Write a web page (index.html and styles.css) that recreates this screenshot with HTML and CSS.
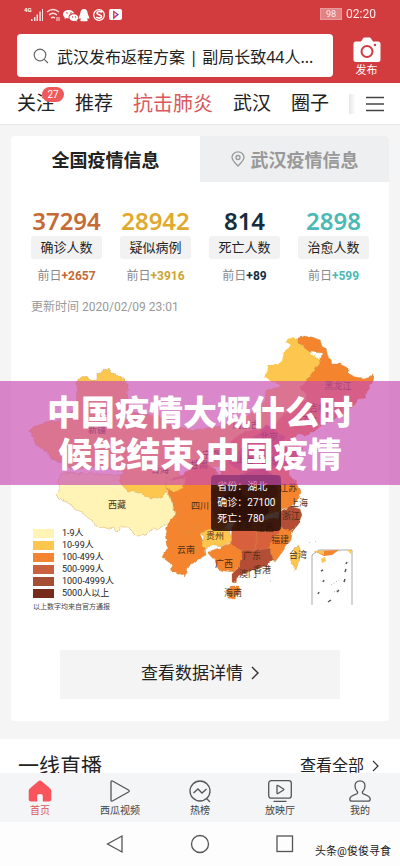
FILE: index.html
```html
<!DOCTYPE html>
<html lang="zh-CN">
<head>
<meta charset="utf-8">
<meta name="viewport" content="width=device-width, initial-scale=1">
<title>抗击肺炎</title>
<link rel="stylesheet" href="styles.css">
</head>
<body>
<div class="app">
  <header class="top">
    <div class="status">
      <svg class="status-icons" width="100" height="16" viewBox="0 0 100 16" fill="#fff" aria-hidden="true">
        <text x="0" y="6" class="net">4G</text>
        <path d="M7 13h1.500v2H7zM10 11h1.500v4H10zM12.500 8.500H14V15h-1.500zM15.300 5.500h1.500V15h-1.500zM18 3h1v12h-1z" opacity=".85"/>
        <g fill="none" stroke="#fff" stroke-width="1.300" opacity=".85"><path d="M23 6q6-5 12 0M25 9q4-3.500 8 0M27 12q2-1.500 4 0"/><path d="M33 11v4M35 11v4" stroke-width="1"/></g>
        <path d="M45 4c-3.800 0-6 2-6 4.300 0 1.400.8 2.500 1.800 3.200L40.500 13l1.900-1c.8.200 1.600.3 2.400.2-.8-3.200 1.700-5 5.300-4.900C49.600 5.300 47.600 4 45 4z"/>
        <path d="M50 8.200c-2.800 0-4.600 1.500-4.600 3.400S47.200 15 50 15l1.300-.2 1.700.7-.4-1.300c1-.6 1.500-1.500 1.500-2.500 0-2-1.800-3.500-4.100-3.500z"/>
        <g fill="#d33c3e"><circle cx="43" cy="7" r=".8"/><circle cx="47" cy="7" r=".8"/><circle cx="48.500" cy="11" r=".7"/><circle cx="51.500" cy="11" r=".7"/></g>
        <path d="M60 3c-2.300 0-3.600 1.700-3.600 4 0 1.800-1.900 3.600-1.700 5.500.3.800 1 .1 1.500-.5l.6 1.500c-1.100.7-.6 1.700.8 1.700h4.800c1.400 0 1.900-1 .8-1.700l.6-1.500c.5.600 1.200 1.300 1.500.5.200-1.900-1.700-3.700-1.700-5.500 0-2.300-1.300-4-3.600-4z"/>
        <circle cx="75" cy="9" r="5.300" fill="none" stroke="#fff" stroke-width="1.300"/>
        <path d="M78 6.300c-2-1.600-5-.8-5 .8 0 2 4.500 1.400 4.500 3.500 0 1.700-3.300 2-5.300.5" fill="none" stroke="#fff" stroke-width="1.700"/>
        <rect x="85" y="3" width="13" height="11" rx="2"/>
        <path d="M89 4.500l6 4-6 5z" fill="#713fa6"/><path d="M89 4.500l3 2v4l-3 3z" fill="#e5424c"/><path d="M90.500 7l2.500 1.500-2.500 1.500z" fill="#fff"/>
      </svg>
      <div class="status-right"><span class="battery">98</span><time>02:20</time></div>
    </div>
    <div class="search-row">
      <form class="search">
        <svg width="16" height="16" viewBox="0 0 16 16" fill="none" stroke="#666" stroke-width="1.200" aria-hidden="true"><circle cx="7" cy="7" r="5.800"/><path d="M11.300 11.300L15 15"/></svg>
        <input type="text" aria-label="搜索" value="武汉发布返程方案 | 副局长致44人...">
      </form>
      <button class="publish" type="button">
        <svg width="28" height="26" viewBox="0 0 28 26" aria-hidden="true"><path d="M3 4.500h5L10 1.500q.5-1 1.500-1h5q1 0 1.500 1l2 3h5q2.500 0 2.500 2.500v15.500q0 2.500-2.500 2.500H3Q.5 25 .5 22.500V7Q.5 4.500 3 4.500z" fill="#fff"/><circle cx="14" cy="14.500" r="5.500" fill="none" stroke="#d33c3e" stroke-width="2"/><circle cx="22" cy="8" r="1.200" fill="#d33c3e"/></svg>
        <span>发布</span>
      </button>
    </div>
  </header>

  <nav class="channels">
    <a href="#">关注<span class="badge">27</span></a>
    <a href="#">推荐</a>
    <a href="#" class="active">抗击肺炎</a>
    <a href="#">武汉</a>
    <a href="#">圈子</a>
    <button class="menu" type="button" aria-label="全部频道"><svg width="18" height="16" viewBox="0 0 18 16" stroke="#444" stroke-width="1.300"><path d="M0 1.500h18M0 8h18M0 14.500h18"/></svg></button>
  </nav>

  <main class="feed">
    <section class="card">
      <div class="tabs">
        <button type="button" class="tab selected">全国疫情信息</button>
        <button type="button" class="tab"><svg width="14" height="16" viewBox="0 0 14 16" fill="none" stroke="#999" stroke-width="1.300" aria-hidden="true"><path d="M7 15C3 11 1 9 1 6.500a6 5.700 0 0 1 12 0C13 9 11 11 7 15z"/><circle cx="7" cy="6.500" r="2"/></svg>武汉疫情信息</button>
      </div>
      <div class="stats">
        <div class="stat confirmed"><strong>37294</strong><span class="pill">确诊人数</span><span class="delta">前日<b>+2657</b></span></div>
        <div class="stat suspected"><strong>28942</strong><span class="pill">疑似病例</span><span class="delta">前日<b>+3916</b></span></div>
        <div class="stat dead"><strong>814</strong><span class="pill">死亡人数</span><span class="delta">前日<b>+89</b></span></div>
        <div class="stat cured"><strong>2898</strong><span class="pill">治愈人数</span><span class="delta">前日<b>+599</b></span></div>
      </div>
      <p class="updated">更新时间 2020/02/09 23:01</p>

      <figure class="map">
        <svg viewBox="11 320 378 320" role="img" aria-label="全国疫情地图">
          <defs><filter id="coast" x="-5%" y="-5%" width="110%" height="110%"><feTurbulence type="fractalNoise" baseFrequency=".16" numOctaves="2" seed="4"/><feDisplacementMap in="SourceGraphic" scale="4" xChannelSelector="R" yChannelSelector="G"/></filter></defs>
          <g stroke="#c9974f" stroke-width=".4" stroke-linejoin="round" filter="url(#coast)">
            <path fill="#fdc64f" d="M97 381l0-7 4-1 3-4 3 1 2-2 1 4 5 1 4 4 6 3 3 4-1 9 2 10 4 9 10 2 15 1 8 6-4 12-8 10-6 20-26 8-20-4-30 2-10-6-10-4-6-8-10-6-3-7-4-6 3-5 14-4 22-6 6-8 4-18-2-8 6-7z"/>
            <path fill="#fff4b5" d="M62 473l-4 8 2 7-3 7 6 6 7 2 5 6 9 4 4 5 5 3 3 5 7 1 6 2 6-1 2 4 4-5 7 0 5 5 4 4 9-1 6-6 6 1 9-6 5-2 3-9-4-10 0-10-14-4-22-6-12-8z"/>
            <path fill="#fdc64f" d="M119 482l6-16 8-14 32-6 15 14 0 22-10 14-2-8-6 9-12 1-10-5-12-2z"/>
            <path fill="#fdc64f" stroke="none" d="M133 414l28 2 6 8 22 6 30-4 22-7 14-8 8-9 3-12 14-4-16-9 2-4 3-8 8 0 5-4 2-9 7-7-5-3 7-5 12 5 8 14 9 4 4 8-8 24-14 17-20 20-24 25-40 12-30 2-24-14-22-10z"/>
            <path fill="#f4842f" d="M298 338l6-2 8 1 8 3 2 6 4 2 2 9 5 7 7 0 8 4 0 5 7 4 9 1 9-3-1 9-5 7-1 7-8 1-5 8-6 1-5 9L325 414 303 405 308 396 300 388 307 380 314 370 320 362 322 353 310 352 298 343z"/>
            <path fill="#f4842f" d="M288 411l14-11 18 7 18 7-5 6-12 5-12 10-12 0-8 8-10 4-12-16zM166 488l6-9 12-4 12-16 16 8 13 15 5 40-10 10-20 2 5 12 1 9-9 5-10 8-2 9-6-4-7-2-1-7-9-7 5-9-2-14 4-13 7-8-5-12z"/>
            <path fill="#f4842f" d="M228 445l15-13 22-4 22 10-4 9 11-3 9 4-8 10-6 7 0 10 6 6 6 12-6 11-30 12-30-20-16-20zM207 552l12-4 12-6 12 6-1 14-8 10-9-1-7-2-3-8z"/>
            <path fill="#f4842f" d="M272 540l7-13 14 2-2 10-8 12-8 11-9-9z"/>
            <path fill="#d8603d" d="M258 433l10-8 17 13-5 10 14-3 9 3-12 18-26 3-20 4-17-10 15-17z"/>
            <path fill="#d8603d" d="M210 488l20-3 14 14 0 18-18 6-13-9zM232 525l13-8 22 2 16-2-4 14-7 9-6 15-13-2-14-3-8-6z"/>
            <path fill="#762b1b" d="M222 496l18-8 18 6 14 7-4 14-17 7-20-2-10-8z"/>
            <path fill="#b44d35" d="M240 475l24-9 15 14-2 17-14 4-20-5zM279 512l11-6 10 3 2 6-4 10-6 7-10-4-5-7z"/>
            <path fill="#b44d35" d="M243 550l14 0 14-2 2 12-8 6-11 4-10 3-7 5-1 5-4-1 0-8 7-7z"/>
            <path fill="#fdc64f" d="M200 532l13-4 16 2 3 10-10 6-8-1-8 4-4-4 2-8zM294 548l5-2 2 7-5 17-6-7zM166 477l8 3 12-3-3 11-8 4-9-3z"/>
            <path fill="#f4842f" d="M226 590l5-4 8 0 0 5-4 8-7-1z"/>
            <path fill="none" d="M171 490l10 40 8 3 9-9 5 8M257 521l-1 28M218 490l6 22"/>
          </g>
          <g class="inset">
            <path d="M312 605v-50l7-5h33v55" fill="none" stroke="#888" stroke-width=".7"/>
            <path d="M314 551l25-1-7 5-8 1z" fill="#f4842f"/><path d="M314 551l10 0 0 4zM321 559l4-2 1 4-4 2zM347 550l4 0 0 4z" fill="#fdc64f"/>
            <g stroke="#555" stroke-width="1.500"><path d="M346 564l1-2M345 572l1-3M344 582l1-3M337 592l2-2M328 602l3-2M318 594l1-2M323 582l1-2M321 571l2-1"/></g>
            <path d="M331 585l8-5M334 592l5-3M309 542l1 1M315 541l1 1M270 581l3 1" stroke="#999" stroke-width=".8" stroke-dasharray="1 2"/>
          </g>
          <g class="labels">
            <text x="97" y="433">新疆</text><text x="117" y="508">西藏</text><text x="160" y="473">青海</text><text x="199" y="468">甘肃</text><text x="211" y="458">宁夏</text><text x="246" y="428">内蒙古</text>
            <text x="338" y="389">黑龙江</text><text x="318" y="411">吉林</text><text x="308" y="424">辽宁</text><text x="269" y="440">北京</text><text x="245" y="463">山西</text><text x="270" y="464">山东</text>
            <text x="200" y="509">四川</text><text x="186" y="553">云南</text><text x="215" y="539">贵州</text><text x="224" y="567">广西</text><text x="252" y="559">广东</text><text x="262" y="573">香港</text><text x="248" y="577">澳门</text><text x="233" y="596">海南</text><text x="280" y="543">福建</text><text x="298" y="558">台湾</text><text x="291" y="519">浙江</text><text x="299" y="506">上海</text><text x="288" y="491">江苏</text><text x="243" y="529">湖南</text><text x="265" y="531">江西</text>
          </g>
        </svg>
        <div class="legend">
          <ul>
            <li><i class="l1"></i>1-9人</li>
            <li><i class="l2"></i>10-99人</li>
            <li><i class="l3"></i>100-499人</li>
            <li><i class="l4"></i>500-999人</li>
            <li><i class="l5"></i>1000-4999人</li>
            <li><i class="l6"></i>5000人以上</li>
          </ul>
          <small>以上数字均来自官方通报</small>
        </div>
        <div class="tip">省份：湖北<br>确诊：27100<br>死亡：780</div>
      </figure>

      <button class="more" type="button">查看数据详情<svg width="8" height="14" viewBox="0 0 8 14" fill="none" stroke="#333" stroke-width="1.400" aria-hidden="true"><path d="M1 1l6 6-6 6"/></svg></button>
    </section>

    <section class="live">
      <h2>一线直播</h2>
      <a href="#">查看全部<svg width="7" height="12" viewBox="0 0 7 12" fill="none" stroke="#333" stroke-width="1.200" aria-hidden="true"><path d="M1 1l5 5-5 5"/></svg></a>
    </section>
  </main>

  <nav class="tabbar">
    <a href="#" class="current"><svg width="24" height="22" viewBox="0 0 24 22"><path d="M10.300 1.200q1.700-1.300 3.400 0l8.500 7.300q1.300 1.200 1.100 3v7.500q0 2.500-2.500 2.500h-6v-5.500q0-2-2.800-2t-2.800 2v5.500h-6Q.7 21.500.7 19v-7.500q-.2-1.800 1.100-3z" fill="#f8545b"/></svg>首页</a>
    <a href="#"><svg width="24" height="22" viewBox="0 0 24 22"><path d="M4.500 1l16 9q1.500 1 0 2l-16 9q-1.500.5-1.500-1V2q0-1.500 1.500-1z"/></svg>西瓜视频</a>
    <a href="#"><svg width="24" height="22" viewBox="0 0 24 22"><circle cx="12" cy="11" r="10"/><path d="M5.500 13l4.500-4 4 4 4.500-4M18.500 18.500L22 22"/></svg>热榜</a>
    <a href="#"><svg width="24" height="22" viewBox="0 0 24 22"><rect x=".7" y=".7" width="22.600" height="17.500" rx="2.500"/><path d="M9 6q0-1 1-.5l5.500 3.500q.7.500 0 1L10 13.500q-1 .5-1-.5zM5.500 21.300h13"/></svg>放映厅</a>
    <a href="#"><svg width="24" height="22" viewBox="0 0 24 22"><path d="M12 .8c-3 0-5 2.200-5 5.200 0 2.500 1 4.300 2.300 5.500.8 1 .2 2-.8 2.500C5.500 15 2 16 1.800 19c0 1.500.6 2.200 2.200 2.200h16c1.600 0 2.200-.7 2.200-2.200-.2-3-3.700-4-6.700-5-1-.5-1.600-1.500-.8-2.500C16 10.300 17 8.500 17 6c0-3-2-5.200-5-5.200z"/></svg>我的</a>
  </nav>

  <footer class="system">
    <button type="button" aria-label="返回"><svg width="20" height="20" viewBox="0 0 20 20"><path d="M17 2v16L2.500 10z"/></svg></button>
    <button type="button" aria-label="主屏幕"><svg width="20" height="20" viewBox="0 0 20 20"><circle cx="10" cy="10" r="8.500"/></svg></button>
    <button type="button" aria-label="最近任务"><svg width="20" height="20" viewBox="0 0 20 20"><rect x="2" y="2" width="15.500" height="15.500"/></svg></button>
    <span class="credit">头条@俊俊寻食</span>
  </footer>

  <h1 class="banner">中国疫情大概什么时候能结束›中国疫情</h1>
</div>
</body>
</html>
```
FILE: styles.css
```css
* { box-sizing: border-box; }
body {
  margin: 0;
  font-family: Roboto, "Noto Sans CJK SC", sans-serif;
  color: #222;
  background: #f5f5f5;
}
button { border: 0; padding: 0; background: none; font: inherit; color: inherit; }
a { color: inherit; text-decoration: none; }
svg { display: block; flex: none; }
.app { position: relative; display: flex; flex-direction: column; height: 100vh; overflow: hidden; }

.top { background: #d33c3e; color: #fff; padding-bottom: 6px; }
.status { display: flex; justify-content: space-between; align-items: center; height: 28px; padding: 0 24px; }
.status-icons .net { font-size: 6px; font-weight: 700; }
.status-right { display: flex; align-items: center; gap: 4px; font-size: 12px; opacity: .9; }
.battery { font-size: 9px; line-height: 10px; padding: 0 5px; background: rgba(255, 255, 255, .4); border: 1px solid #eba5a7; }
.search-row { display: flex; gap: 16px; padding: 6px 16px 0 17px; }
.search { flex: 1; display: flex; align-items: center; gap: 8px; height: 43px; padding-left: 16px; background: #fff; border-radius: 4px; }
.search input { flex: 1; min-width: 0; border: 0; padding: 0; background: none; outline: none; color: #222; font: 16px "Noto Sans", "Noto Sans CJK SC", sans-serif; }
.publish { display: flex; flex-direction: column; align-items: center; justify-content: space-between; width: 35px; font-size: 11px; line-height: 12px; padding-top: 3px; }

.channels { display: flex; align-items: center; gap: 20px; height: 42px; flex: none; padding: 0 18px 0 17px; background: #fff; border-bottom: 1px solid #e6e6e6; font-size: 19px; line-height: 28px; white-space: nowrap; }
.channels a { position: relative; }
.channels .active { font-size: 20px; color: #d8585c; }
.badge { position: absolute; left: 25px; top: -3px; width: 22px; border-radius: 8px; background: #ee5a5c; color: #fff; font-size: 10px; line-height: 15px; text-align: center; }
.menu { display: flex; align-items: center; gap: 10px; margin-left: auto; }
.menu::before { content: ""; width: 7px; height: 20px; background: linear-gradient(90deg, #e8e8e8, #fff); }

.feed { flex: 1; min-height: 0; overflow: hidden; padding-top: 11px; }
.card { margin: 0 11px 18px; padding-bottom: 22px; background: #fff; border-radius: 4px; overflow: hidden; }
.tabs { display: grid; grid-template-columns: 1fr 1fr; }
.tab { display: flex; justify-content: center; align-items: center; gap: 6px; height: 46px; font-size: 18px; font-weight: 700; background: #eeeff0; color: #999; }
.tab.selected { background: #fff; color: #222; }
.stats { display: grid; grid-template-columns: repeat(4, 1fr); gap: 18px; padding: 24px 20px 0; }
.stat { display: flex; flex-direction: column; align-items: center; }
.stat strong { font: 600 24px/30px "Noto Sans", sans-serif; }
.pill { align-self: stretch; background: #f2f2f2; border-radius: 3px; text-align: center; font-size: 13px; line-height: 23px; }
.delta { margin-top: 8px; font-size: 12px; line-height: 18px; color: #888; white-space: nowrap; }
.confirmed strong, .confirmed b { color: #c56b38; }
.suspected strong { color: #e0aa2e; }
.suspected b { color: #cba62e; }
.dead strong, .dead b { color: #142e40; }
.cured strong, .cured b { color: #4bb9b4; }
.updated { margin: 13px 20px 0; font-size: 12px; line-height: 18px; color: #999; }

.map { position: relative; margin: 4px 0 0; }
.map > svg { width: 100%; height: auto; }
.labels { font-size: 9px; text-anchor: middle; fill: #503018; }
.legend { position: absolute; left: 22px; bottom: 28px; font-size: 9px; line-height: 12px; }
.legend ul { list-style: none; margin: 0; padding: 0; }
.legend li { display: flex; align-items: center; gap: 8px; }
.legend i { width: 21px; height: 9px; }
.legend small { display: block; margin-top: 3px; font-size: 7px; line-height: 10px; color: #444; }
.l1 { background: #fff4b5; }
.l2 { background: #fdc64f; }
.l3 { background: #f4842f; }
.l4 { background: #c9603f; }
.l5 { background: #a64d35; }
.l6 { background: #762b1b; }
.tip { position: absolute; left: 53%; top: 155px; padding: 4px 6px; border-radius: 4px; background: rgba(35, 12, 5, .85); color: #fff; font-size: 10px; line-height: 16px; }

.more { display: flex; align-items: center; justify-content: center; gap: 8px; width: calc(100% - 98px); height: 49px; margin: 10px auto 0; background: #f4f4f4; font-size: 17px; line-height: 20px; padding-bottom: 4px; }
.live { display: flex; justify-content: space-between; align-items: center; padding: 12px 21px 12px 18px; background: #fff; }
.live h2 { margin: 0; font-size: 21px; font-weight: 400; line-height: 30px; }
.live a { display: flex; align-items: center; gap: 8px; font-size: 16px; line-height: 30px; }

.tabbar { display: grid; grid-template-columns: repeat(5, 1fr); flex: none; padding: 7px 0 4px; background: #f3f5f7; }
.tabbar a { display: flex; flex-direction: column; align-items: center; gap: 2px; font-size: 10px; line-height: 14px; color: #444; }
.tabbar svg, .system svg { fill: none; stroke: #555; stroke-width: 1.3; overflow: visible; }
.tabbar .current { color: #d8585c; }
.tabbar .current svg { stroke: none; }
.system { position: relative; display: flex; justify-content: center; align-items: center; gap: 65px; flex: none; height: 44px; background: #fdfdfd; }
.credit { position: absolute; right: 9px; bottom: 6px; font-size: 11px; line-height: 16px; color: #222; }

.banner { position: absolute; left: 0; right: 0; top: 381px; margin: 0; padding: 9px 40px 11px; background: rgba(200, 76, 177, .67); color: #fff; font: 900 34px/42px "Noto Sans CJK SC", sans-serif; text-align: center; }
```
